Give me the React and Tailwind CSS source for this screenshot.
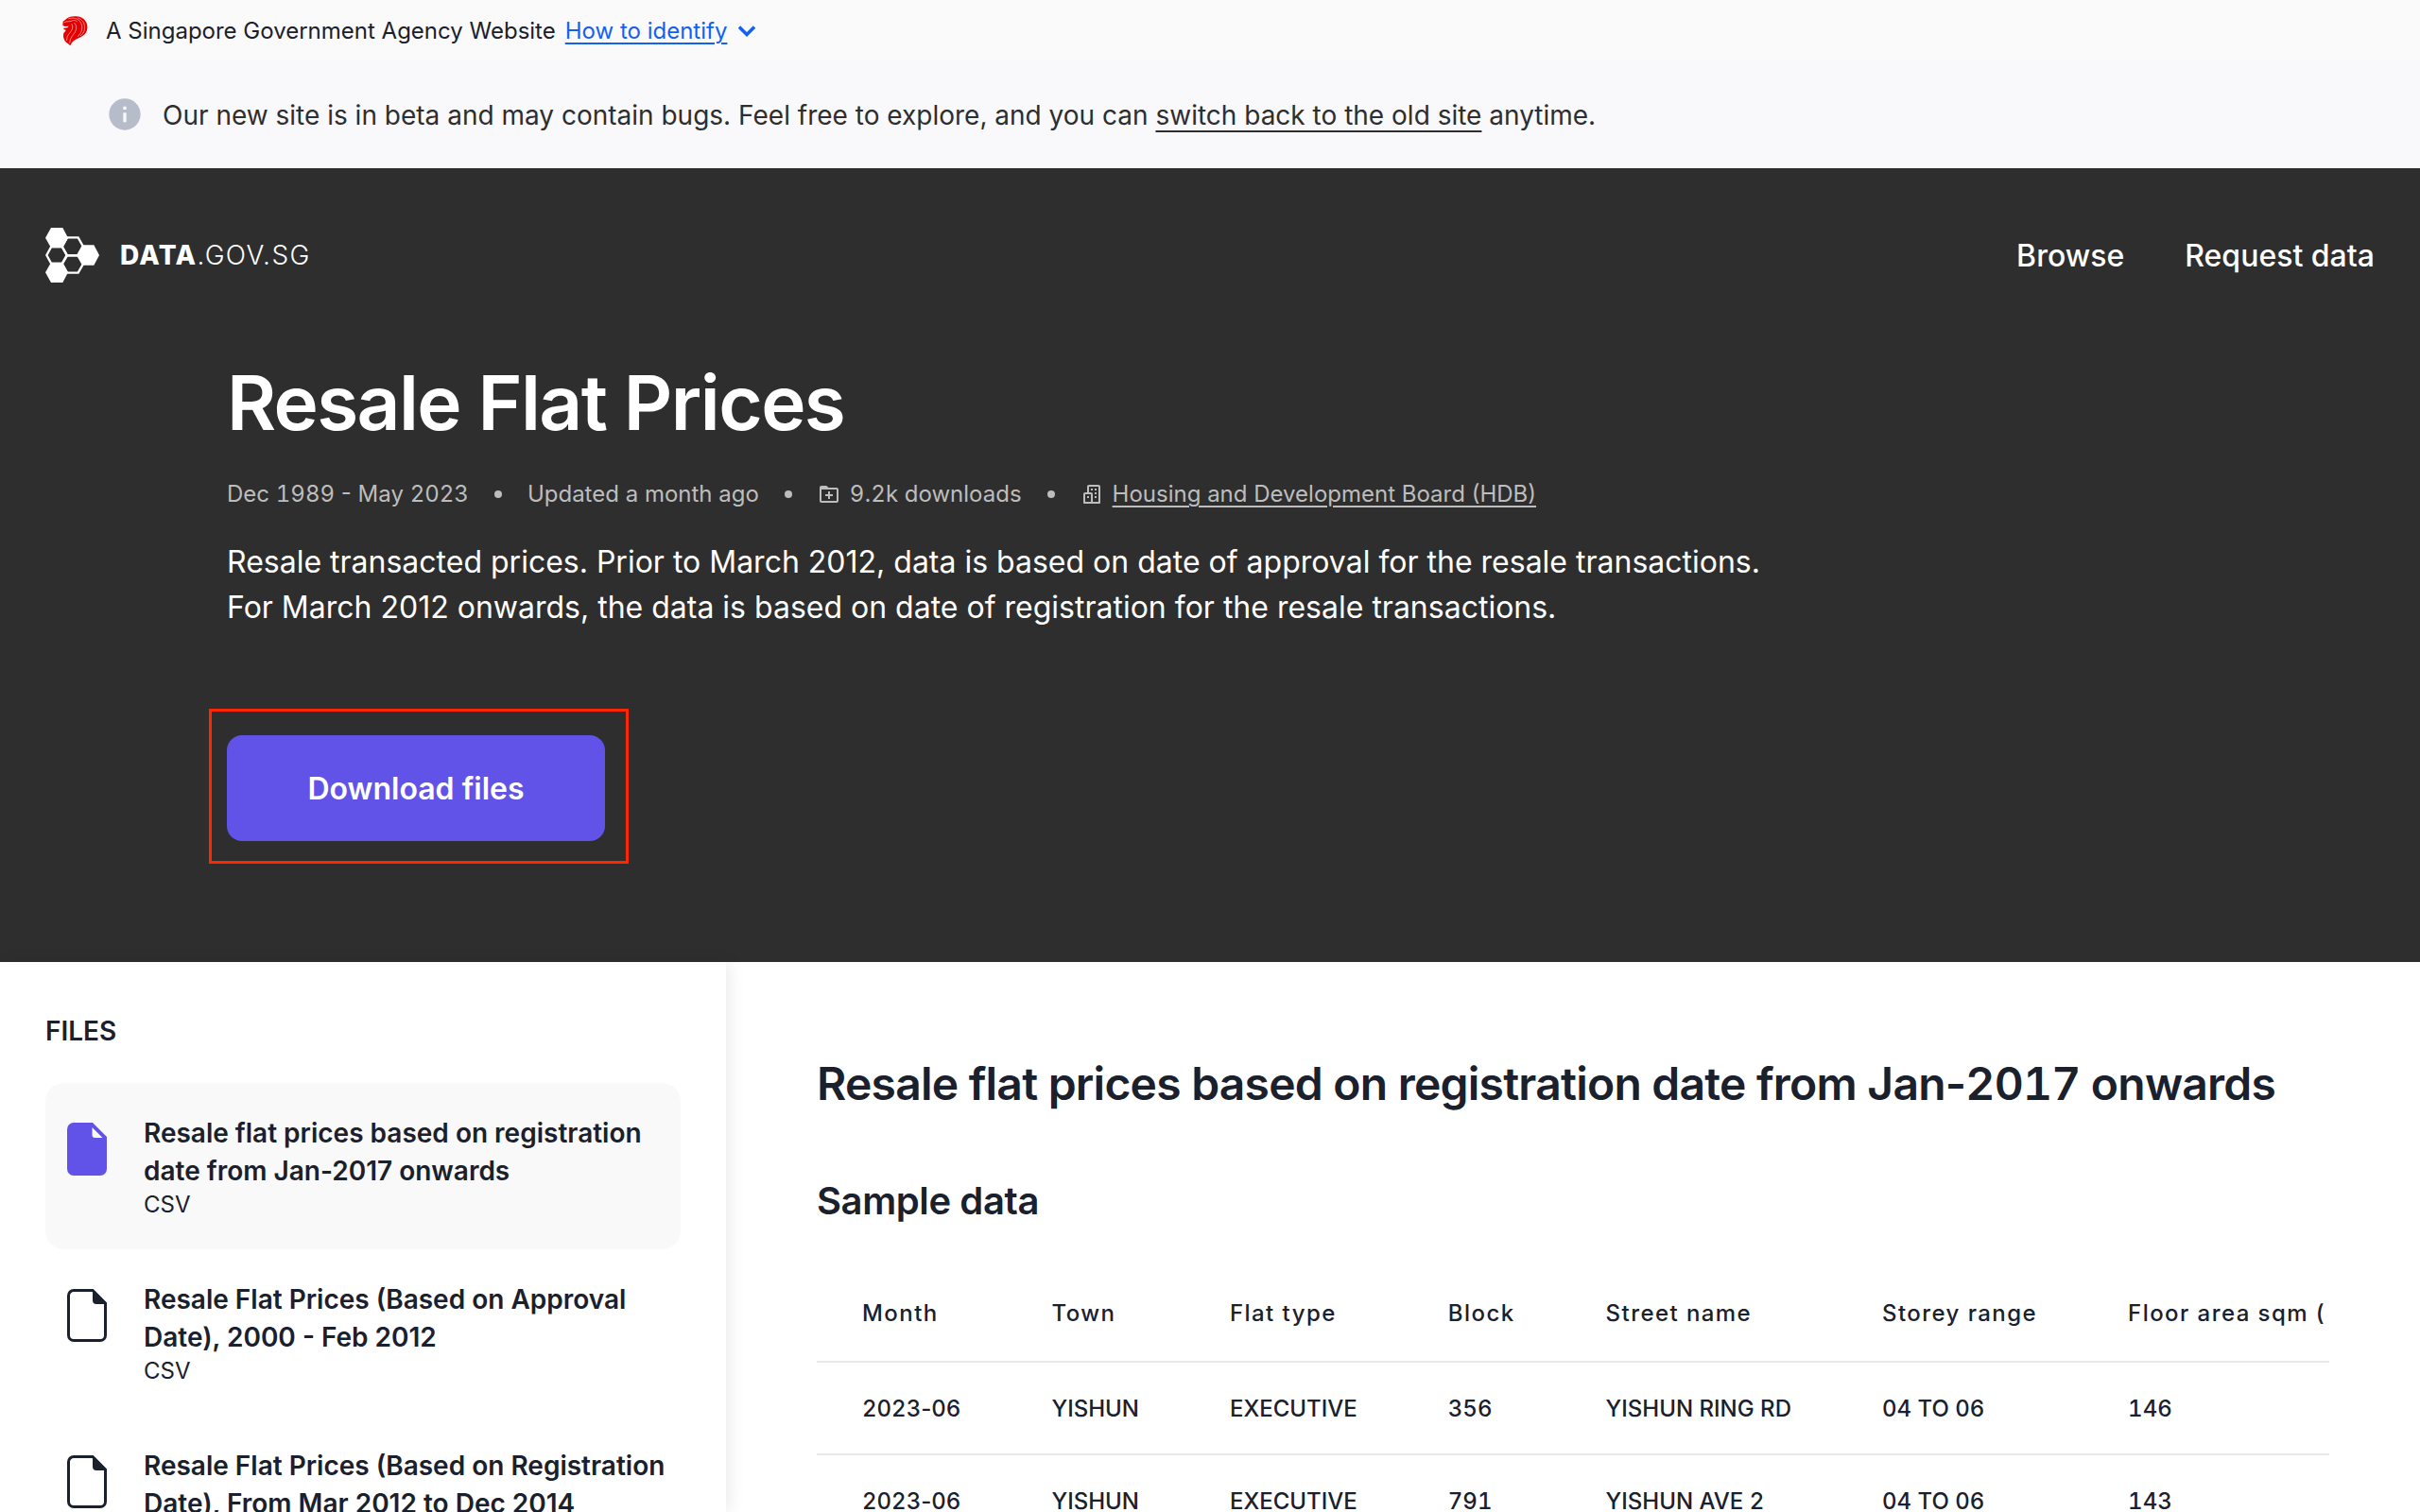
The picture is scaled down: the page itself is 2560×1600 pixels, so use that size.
import { BiBuildings, BiFolderPlus, BiSolidInfoCircle } from "react-icons/bi";

const files = [
  { title: "Resale flat prices based on registration date from Jan-2017 onwards", type: "CSV", active: true },
  { title: "Resale Flat Prices (Based on Approval Date), 2000 - Feb 2012", type: "CSV" },
  { title: "Resale Flat Prices (Based on Registration Date), From Mar 2012 to Dec 2014", type: "CSV" },
];

const columns = ["Month", "Town", "Flat type", "Block", "Street name", "Storey range", "Floor area sqm ("];

const rows = [
  ["2023-06", "YISHUN", "EXECUTIVE", "356", "YISHUN RING RD", "04 TO 06", "146"],
  ["2023-06", "YISHUN", "EXECUTIVE", "791", "YISHUN AVE 2", "04 TO 06", "143"],
];

// Sets runs of digits in tabular figures and leaves the other characters proportional.
function Figures({ children }) {
  return children.split(/(\d+)/).map((part, i) =>
    /^\d+$/.test(part) ? (
      <span key={i} className="tabular-nums">
        {part}
      </span>
    ) : (
      part
    )
  );
}

function LionIcon() {
  return (
    <svg viewBox="50 32 81 96" className="h-8 w-[27px] shrink-0" aria-hidden="true">
      <path
        fill="#e60000"
        d="M52 49 L58 45 C64 37 78 32 92 33 C106 33 117 39 122 46 C129 54 131 66 128 77 C125 88 117 95 105 100 C92 105 80 112 75 126 C70 120 63 118 58 111 C53 103 52 95 54 86 C57 82 60 80 61 76 L54 74 L54 70 L66 69 L70 64 L58 65 L51 61 Z"
      />
      <g fill="none" stroke="#fafafa" strokeWidth="1.6" strokeLinecap="round">
        <path d="M56 52 C64 47 72 51 80 47 C86 44 92 45 96 49" />
        <path d="M70 40 C84 36 98 39 105 48 C118 64 113 84 99 97" />
        <path d="M88 54 C97 62 96 76 86 89 C79 98 74 106 73 117" />
        <path d="M100 38 C116 44 123 58 120 76 C118 84 114 90 108 94" />
        <path d="M80 58 C86 67 80 78 73 86 C67 92 64 99 64 109" />
      </g>
    </svg>
  );
}

function ChevronDown() {
  return (
    <svg viewBox="0 0 18 12" className="h-3 w-[18px]" fill="none" stroke="currentColor" strokeWidth="3.4" aria-hidden="true">
      <path d="M1 1.500 9 9.500 17 1.500" />
    </svg>
  );
}

function HexLogo() {
  return (
    <svg viewBox="144 123 171 174" className="h-[58px] w-[57px]" aria-hidden="true">
      <g fill="#fff">
        <path d="M144 155 162 123H199L216 155 199 187H162Z" />
        <path d="M144 265 162 233H199L216 265 199 297H162Z" />
        <path d="M243 210 261 178H298L315 210 298 242H261Z" />
      </g>
      <g fill="none" stroke="#fff" strokeWidth="7">
        <path d="M148 210 163 183H197L212 210 197 237H163Z" />
        <path d="M213 154H248L264 183 248 211H213L197 183Z" />
        <path d="M213 211H248L264 238 248 266H213L197 238Z" />
      </g>
    </svg>
  );
}

function FileIcon({ active }) {
  return active ? (
    <svg viewBox="0 0 42 56" className="mt-[9px] h-14 w-[42px] shrink-0" aria-hidden="true">
      <path
        fill="#6253e8"
        fillRule="evenodd"
        d="M7 0H27L42 15V49A7 7 0 0 1 35 56H7A7 7 0 0 1 0 49V7A7 7 0 0 1 7 0ZM26.500 5V13A3 3 0 0 0 29.500 16H37.500Z"
      />
    </svg>
  ) : (
    <svg viewBox="0 0 42 56" className="mt-[9px] h-14 w-[42px] shrink-0" aria-hidden="true">
      <path
        fill="none"
        stroke="#1a202c"
        strokeWidth="3"
        d="M7 1.500H27L40.500 15V49A5.500 5.500 0 0 1 35 54.500H7A5.500 5.500 0 0 1 1.500 49V7A5.500 5.500 0 0 1 7 1.500Z"
      />
      <path fill="#1a202c" d="M27 1V12A4 4 0 0 0 31 16H42V15L28 1Z" />
    </svg>
  );
}

function Dot() {
  return <span className="size-2 rounded-full bg-[#bdbdbd]" aria-hidden="true" />;
}

export default function App() {
  return (
    <div className="flex h-screen flex-col overflow-hidden bg-white font-['Inter',sans-serif] text-[#1a202c]">
      <div className="flex h-16 shrink-0 items-center bg-[#fafafa] px-[66px] pt-0.5 text-2xl leading-8">
        <LionIcon />
        <span className="ml-[19px]">A Singapore Government Agency Website</span>
        <button type="button" className="ml-2.5 flex items-center gap-3 text-[#1361f0]">
          <span className="underline decoration-2 underline-offset-4">How to identify</span>
          <ChevronDown />
        </button>
      </div>

      <div className="flex h-[114px] shrink-0 items-center gap-5 bg-[#f9f9fc] px-28 text-[28px] leading-10 text-[#2e2e2e]">
        <BiSolidInfoCircle className="size-10 shrink-0 text-[#b7bccb]" />
        <p className="pt-0.5">
          Our new site is in beta and may contain bugs. Feel free to explore, and you can{" "}
          <a href="#old-site" className="underline decoration-2 underline-offset-6">
            switch back to the old site
          </a>{" "}
          anytime.
        </p>
      </div>

      <header className="shrink-0 bg-[#2e2e2e] pb-32 text-white">
        <nav className="flex h-[184px] items-center justify-between px-12">
          <a href="#home" className="flex items-center gap-[22px]">
            <HexLogo />
            <span className="text-[28px] leading-10 font-light tracking-wider">
              <b className="font-extrabold">DATA</b>.GOV.SG
            </span>
          </a>
          <div className="flex gap-16 pt-0.5 text-[32px] leading-10 font-medium">
            <a href="#browse">Browse</a>
            <a href="#request">Request data</a>
          </div>
        </nav>
        <div className="px-60">
          <h1 className="mt-5 text-[80px] leading-[88px] font-semibold tracking-[-0.02em]">Resale Flat Prices</h1>
          <div className="mt-[37px] flex items-center gap-[27px] text-2xl leading-8 text-[#bdbdbd]">
            <span>
              <Figures>Dec 1989 - May 2023</Figures>
            </span>
            <Dot />
            <span>Updated a month ago</span>
            <Dot />
            <span className="flex items-center gap-2.5">
              <BiFolderPlus />
              <span>
                <Figures>9.2k downloads</Figures>
              </span>
            </span>
            <Dot />
            <span className="flex items-center gap-2.5">
              <BiBuildings />
              <a href="#hdb" className="underline decoration-2 underline-offset-4">
                Housing and Development Board (HDB)
              </a>
            </span>
          </div>
          <p className="mt-8 max-w-[1660px] text-[32px] leading-[48px]">
            Resale transacted prices. Prior to March 2012, data is based on date of approval for the resale
            transactions.{" "}
            <br />
            For March 2012 onwards, the data is based on date of registration for the resale transactions.
          </p>
          <div className="relative mt-[111px] w-[400px]">
            <button type="button" className="h-28 w-full rounded-2xl bg-[#6253e8] pt-0.5 text-[32px] leading-10 font-semibold">
              Download files
            </button>
            <div className="pointer-events-none absolute -top-7 -right-[25px] -bottom-6 -left-[19px] border-3 border-[#ff2600]" />
          </div>
        </div>
      </header>

      <div className="flex min-h-0 flex-1">
        <aside className="z-10 w-[30%] shrink-0 px-12 pt-[53px] shadow-[4px_0_16px_rgba(0,0,0,0.08)]">
          <h2 className="text-[28px] leading-10 font-semibold">FILES</h2>
          <ul className="mt-[35px]">
            {files.map((file) => (
              <li key={file.title}>
                <button
                  type="button"
                  className={
                    file.active
                      ? "flex w-full items-start gap-[39px] rounded-[20px] bg-[#f9f9f9] pt-[33px] pr-3 pb-[31px] pl-[23px] text-left"
                      : "flex w-full items-start gap-[39px] rounded-[20px] pt-[33px] pr-3 pb-[31px] pl-[23px] text-left"
                  }
                >
                  <FileIcon active={file.active} />
                  <span className="flex flex-col">
                    <span className="text-[28px] leading-10 font-semibold">
                      {file.title}
                    </span>
                    <span className="text-2xl leading-8">{file.type}</span>
                  </span>
                </button>
              </li>
            ))}
          </ul>
        </aside>

        <main className="min-w-0 flex-1 px-24 pt-[97px]">
          <h2 className="text-5xl leading-[64px] font-semibold tracking-[-0.016em]">
            <Figures>Resale flat prices based on registration date from Jan-2017 onwards</Figures>
          </h2>
          <h3 className="mt-16 text-[40px] leading-[56px] font-semibold tracking-[-0.01em]">Sample data</h3>
          <div className="mt-[39px] overflow-hidden">
            <table className="text-left text-2xl leading-8 font-medium whitespace-nowrap">
              <thead>
                <tr className="border-b-2 border-[#e9e9e9]">
                  {columns.map((name) => (
                    <th key={name} scope="col" className="px-12 pt-9 pb-[34px] font-medium tracking-[0.06em]">
                      {name}
                    </th>
                  ))}
                </tr>
              </thead>
              <tbody>
                {rows.map((row) => (
                  <tr key={row[3]} className="border-b-2 border-[#e9e9e9]">
                    {row.map((cell, i) => (
                      <td key={columns[i]} className="px-12 pt-[33px] pb-[31px]">
                        <Figures>{cell}</Figures>
                      </td>
                    ))}
                  </tr>
                ))}
              </tbody>
            </table>
          </div>
        </main>
      </div>
    </div>
  );
}
